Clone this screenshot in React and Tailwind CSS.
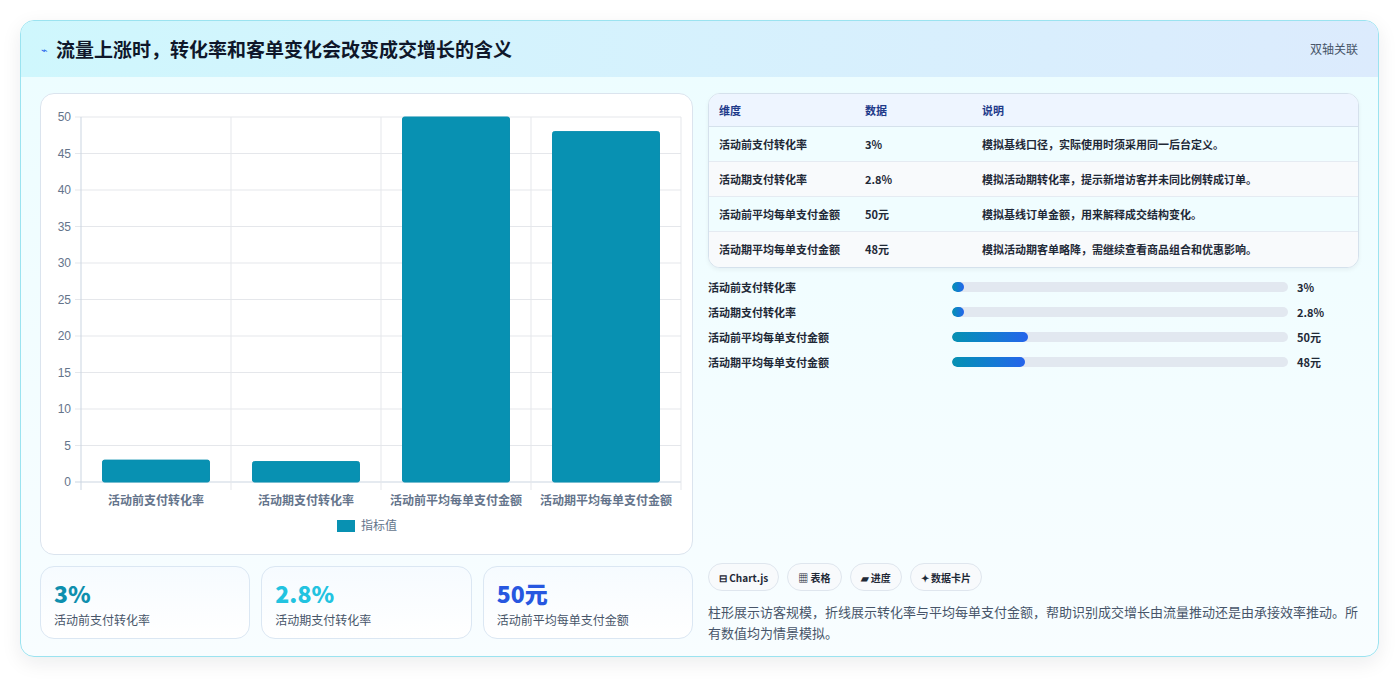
export default function App() {
  const rows = [
    ["活动前支付转化率", "3%", "模拟基线口径，实际使用时须采用同一后台定义。"],
    ["活动期支付转化率", "2.8%", "模拟活动期转化率，提示新增访客并未同比例转成订单。"],
    ["活动前平均每单支付金额", "50元", "模拟基线订单金额，用来解释成交结构变化。"],
    ["活动期平均每单支付金额", "48元", "模拟活动期客单略降，需继续查看商品组合和优惠影响。"],
  ];
  const bars = [
    ["活动前支付转化率", "3%", 12],
    ["活动期支付转化率", "2.8%", 12],
    ["活动前平均每单支付金额", "50元", 76],
    ["活动期平均每单支付金额", "48元", 73],
  ];
  const vals = [3, 2.8, 50, 48];
  const x0 = 40, x1 = 640, yTop = 23, yBot = 388;
  const sy = (v) => yBot - (v / 50) * (yBot - yTop);
  const font = { fontFamily: '"Noto Sans CJK SC", "Noto Sans", sans-serif' };
  return (
    <div className="w-[1399px] h-[679px] bg-white pt-5 px-5" style={font}>
      <div className="w-[1359px] h-[637px] rounded-[14px] border border-[#9be3f0] bg-gradient-to-b from-[#ecfdff] to-[#f8fdff] shadow-[0_6px_20px_rgba(15,23,42,0.08)] overflow-hidden flex flex-col">
        <div className="h-[56px] shrink-0 flex items-center justify-between px-5 bg-gradient-to-r from-[#cff7fd] to-[#dcebfd]">
          <div className="flex items-center gap-2">
            <span className="text-[#2563eb] text-[11px]">⌁</span>
            <span className="text-[19px] font-bold text-[#0f172a]">流量上涨时，转化率和客单变化会改变成交增长的含义</span>
          </div>
          <span className="text-[12px] text-[#475569]">双轴关联</span>
        </div>
        <div className="flex gap-[15px] px-[19px] pt-4">
          <div className="w-[653px] flex flex-col gap-[11px]">
            <div className="h-[462px] rounded-[14px] border border-[#dbe4ee] bg-white">
              <svg width="651" height="460" className="block">
                {[0,5,10,15,20,25,30,35,40,45,50].map((v) => (
                  <g key={v}>
                    <line x1={x0 - 6} x2={x1} y1={sy(v)} y2={sy(v)} stroke={v === 0 ? "#cbd5e1" : "#e5e7eb"} />
                    <text x={x0 - 10} y={sy(v) + 4} textAnchor="end" fontSize="12" fill="#64748b" fontFamily="Liberation Sans, sans-serif">{v}</text>
                  </g>
                ))}
                {[0,1,2,3,4].map((i) => (
                  <line key={i} x1={x0 + i * 150} x2={x0 + i * 150} y1={yTop} y2={yBot + 8} stroke={i === 0 ? "#cbd5e1" : "#e5e7eb"} />
                ))}
                {vals.map((v, i) => (
                  <g key={i}>
                    <rect x={x0 + i * 150 + 21.5} y={sy(v)} width="107" height={yBot - sy(v)} rx="2" fill="#0891b2" stroke="#0b8fb0" />
                    <text x={x0 + i * 150 + 75} y={411} textAnchor="middle" fontSize="12" fontWeight="600" fill="#64748b">{bars[i][0]}</text>
                  </g>
                ))}
                <rect x="296" y="426" width="18" height="12" fill="#0891b2" />
                <text x="320" y="436" fontSize="12" fill="#64748b">指标值</text>
              </svg>
            </div>
            <div className="grid grid-cols-3 gap-[11px]">
              {[["3%", "text-[#0e8fae]", "活动前支付转化率"], ["2.8%", "text-[#22c3e0]", "活动期支付转化率"], ["50元", "text-[#2757e0]", "活动前平均每单支付金额"]].map(([v, c, l]) => (
                <div key={l} className="h-[73px] rounded-[14px] border border-[#dbe7f3] bg-gradient-to-b from-[#f6fbff] to-white px-[13px] pt-[10px]">
                  <div className={`text-[23px] font-extrabold leading-[32px] ${c}`}>{v}</div>
                  <div className="text-[12px] text-[#475569] mt-[2px]">{l}</div>
                </div>
              ))}
            </div>
          </div>
          <div className="w-[653px] flex flex-col">
            <div className="rounded-[12px] border border-[#d5e1ec] bg-white overflow-hidden shadow-[0_2px_4px_rgba(15,23,42,0.05)]">
              <div className="flex h-[33px] items-center bg-[#eef5ff] border-b border-[#d5e1ec] text-[11px] font-bold text-[#1e3a8a]">
                <div className="w-[156px] pl-[10px]">维度</div>
                <div className="w-[117px]">数据</div>
                <div>说明</div>
              </div>
              {rows.map((r, i) => (
                <div key={i} className={`flex h-[35px] items-center text-[11px] font-semibold text-[#1f2937] ${i < 3 ? "border-b border-[#e5ebf2]" : ""} ${i % 2 === 1 ? "bg-[#f8fafc]" : "bg-[#f0fdff]"}`}>
                  <div className="w-[156px] pl-[10px]">{r[0]}</div>
                  <div className="w-[117px]">{r[1]}</div>
                  <div>{r[2]}</div>
                </div>
              ))}
            </div>
            <div className="flex flex-col mt-[10px] gap-[7px]">
              {bars.map(([l, v, w]) => (
                <div key={l} className="flex items-center h-[18px] text-[11px] font-semibold text-[#1f2937]">
                  <div className="w-[244px]">{l}</div>
                  <div className="w-[336px] h-[10px] rounded-full bg-[#e2e8f0] overflow-hidden">
                    <div className="h-full rounded-full bg-gradient-to-r from-[#0891b2] to-[#2563eb]" style={{ width: w }} />
                  </div>
                  <div className="ml-[9px] font-bold">{v}</div>
                </div>
              ))}
            </div>
            <div className="mt-[192px] flex gap-[8px]">
              {["⊟ Chart.js", "▦ 表格", "▰ 进度", "✦ 数据卡片"].map((t) => (
                <div key={t} className="h-[28px] px-[10px] rounded-full border border-[#dfe6ee] bg-[#f8fafc] flex items-center text-[10px] font-semibold text-[#1f2937]">{t}</div>
              ))}
            </div>
            <p className="mt-[10px] text-[13px] leading-[21px] text-[#475569]">柱形展示访客规模，折线展示转化率与平均每单支付金额，帮助识别成交增长由流量推动还是由承接效率推动。所有数值均为情景模拟。</p>
          </div>
        </div>
      </div>
    </div>
  );
}
